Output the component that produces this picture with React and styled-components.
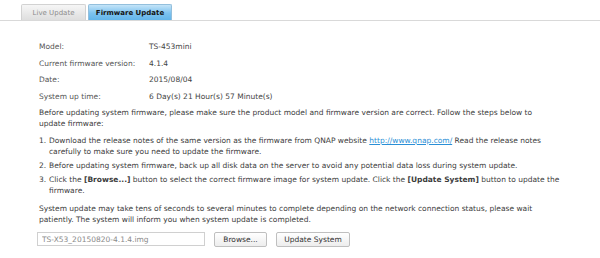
import React from "react";
import styled, { createGlobalStyle } from "styled-components";

const GlobalStyle = createGlobalStyle`
  html, body {
    margin: 0;
    padding: 0;
    background: #ffffff;
  }
  body {
    font-family: "DejaVu Sans", Verdana, sans-serif;
    font-size: 7.5px;
    color: #3c3c3c;
  }
`;

const info = [
  ["Model:", "TS-453mini"],
  ["Current firmware version:", "4.1.4"],
  ["Date:", "2015/08/04"],
  ["System up time:", "6 Day(s) 21 Hour(s) 57 Minute(s)"],
];

export default function App() {
  return (
    <Page>
      <GlobalStyle />
      <TabBar>
        <Tab width={65}>Live Update</Tab>
        <Tab width={84} active>Firmware Update</Tab>
      </TabBar>

      <Content>
        <InfoTable>
          {info.map(([label, value]) => (
            <React.Fragment key={label}>
              <Label>{label}</Label>
              <Value>{value}</Value>
            </React.Fragment>
          ))}
        </InfoTable>

        <Para top={2}>
          Before updating system firmware, please make sure the product model and firmware version are correct. Follow the steps below to update firmware:
        </Para>

        <Steps>
          <Step>
            <Num>1.</Num>
            <span>
              Download the release notes of the same version as the firmware from QNAP website{" "}
              <A href="#">http://www.qnap.com/</A> Read the release notes carefully to make sure you need to update the firmware.
            </span>
          </Step>
          <Step>
            <Num>2.</Num>
            <span>Before updating system firmware, back up all disk data on the server to avoid any potential data loss during system update.</span>
          </Step>
          <Step>
            <Num>3.</Num>
            <span>
              Click the <b>[Browse...]</b> button to select the correct firmware image for system update. Click the <b>[Update System]</b> button to update the firmware.
            </span>
          </Step>
        </Steps>

        <Para top={7}>
          System update may take tens of seconds to several minutes to complete depending on the network connection status, please wait patiently. The system will inform you when system update is completed.
        </Para>

        <Actions>
          <FileField value="TS-X53_20150820-4.1.4.img" readOnly />
          <Button width={53}>Browse...</Button>
          <Button width={74}>Update System</Button>
        </Actions>
      </Content>
    </Page>
  );
}

/* ================= CSS ================= */

const Page = styled.div`
  width: 600px;
  height: 258px;
  overflow: hidden;
`;

const TabBar = styled.div`
  display: flex;
  gap: 2px;
  padding: 4px 0 0 21px;
  border-bottom: 1px solid #d9d9d9;
`;

const Tab = styled.div`
  box-sizing: border-box;
  width: ${({ width }) => width}px;
  height: 16px;
  display: flex;
  align-items: center;
  justify-content: center;
  border: 1px solid ${({ active }) => (active ? "#93bfdc" : "#d2d2d2")};
  border-bottom: none;
  border-radius: 2px 2px 0 0;
  background: ${({ active }) =>
    active
      ? "linear-gradient(#c4e4f8, #7cc2ef 55%, #63b5ea)"
      : "linear-gradient(#f6f6f6, #dedede)"};
  color: ${({ active }) => (active ? "#151515" : "#8c8c8c")};
  font-weight: ${({ active }) => (active ? "bold" : "normal")};
  font-size: 7px;
`;

const Content = styled.div`
  padding: 17px 0 0 39px;
  width: 536px;
`;

const InfoTable = styled.div`
  display: grid;
  grid-template-columns: 110px auto;
  grid-auto-rows: 16.7px;
  align-items: center;
`;

const Label = styled.div`
  color: #555555;
`;

const Value = styled.div`
  color: #444444;
`;

const Para = styled.p`
  margin: ${({ top }) => top}px 0 0;
  max-width: 520px;
  line-height: 11px;
`;

const Steps = styled.div`
  margin-top: 6px;
  display: flex;
  flex-direction: column;
  gap: 3px;
`;

const Step = styled.div`
  display: flex;
  line-height: 11px;
`;

const Num = styled.span`
  flex: 0 0 10px;
`;

const A = styled.a`
  color: #2a8fd6;
  text-decoration: underline;
`;

const Actions = styled.div`
  display: flex;
  align-items: center;
  gap: 9px;
  margin: 7px 0 0 -2px;
`;

const FileField = styled.input`
  box-sizing: border-box;
  width: 168px;
  height: 14px;
  padding: 0 4px;
  border: 1px solid #d0d0d0;
  font-family: inherit;
  font-size: 7.5px;
  color: #8a8a8a;
  outline: none;
`;

const Button = styled.button`
  box-sizing: border-box;
  width: ${({ width }) => width}px;
  height: 15px;
  padding: 0;
  border: 1px solid #bfbfbf;
  border-radius: 2px;
  background: linear-gradient(#ffffff, #ededed);
  font-family: inherit;
  font-size: 7.5px;
  color: #333333;
`;
